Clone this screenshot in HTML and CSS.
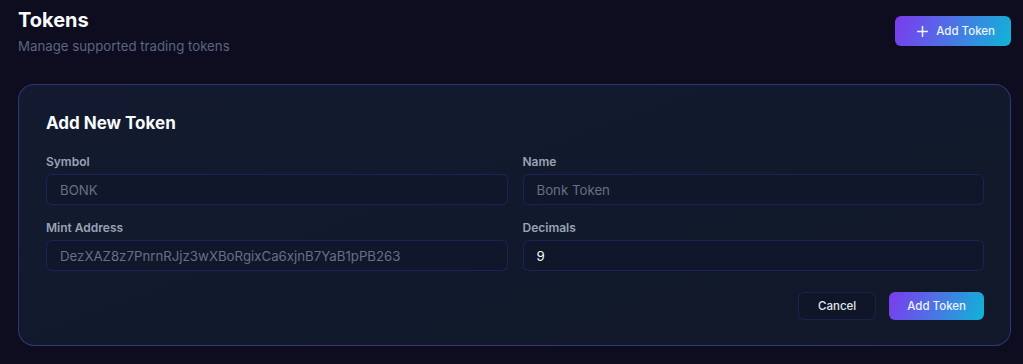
FILE: index.html
```html
<!DOCTYPE html>
<html lang="en">
<head>
<meta charset="utf-8">
<title>Tokens</title>
<link rel="stylesheet" href="styles.css">
</head>
<body>
<div class="page">
  <header class="page-header">
    <div class="titles">
      <h1 class="page-title">Tokens</h1>
      <p class="page-subtitle">Manage supported trading tokens</p>
    </div>
    <button class="btn btn-primary btn-header" type="button">
      <svg class="plus" width="11" height="11" viewBox="0 0 11 11" aria-hidden="true">
        <path d="M5.5 0.5v10M0.5 5.5h10" stroke="currentColor" stroke-width="1.5" stroke-linecap="round" fill="none"/>
      </svg>
      <span>Add Token</span>
    </button>
  </header>

  <section class="card">
    <h2 class="card-title">Add New Token</h2>
    <div class="form-grid">
      <label class="field">
        <span class="field-label">Symbol</span>
        <input class="input" type="text" placeholder="BONK">
      </label>
      <label class="field">
        <span class="field-label">Name</span>
        <input class="input" type="text" placeholder="Bonk Token">
      </label>
      <label class="field">
        <span class="field-label">Mint Address</span>
        <input class="input" type="text" placeholder="DezXAZ8z7PnrnRJjz3wXBoRgixCa6xjnB7YaB1pPB263">
      </label>
      <label class="field">
        <span class="field-label">Decimals</span>
        <input class="input" type="text" value="9">
      </label>
    </div>
    <div class="form-actions">
      <button class="btn btn-secondary" type="button">Cancel</button>
      <button class="btn btn-primary btn-submit" type="button">Add Token</button>
    </div>
  </section>
</div>
</body>
</html>
```
FILE: styles.css
```css
* { box-sizing: border-box; }
html, body { margin: 0; padding: 0; }
body {
  background: #0e0c1f;
  font-family: Inter, "Noto Sans", sans-serif;
  color: #f1f5f9;
  height: 364px;
  overflow: hidden;
}
.page {
  padding: 6px 12px 18px 18px;
}
.page-header {
  display: flex;
  justify-content: space-between;
  align-items: flex-start;
}
.page-title {
  margin: 0;
  font-size: 20px;
  line-height: 28px;
  font-weight: 700;
  color: #f8fafc;
}
.page-subtitle {
  margin: 2px 0 0;
  font-size: 13.25px;
  line-height: 20px;
  color: #5a6683;
}
.btn {
  font-family: inherit;
  border: 0;
  border-radius: 6px;
  font-size: 11.5px;
  font-weight: 500;
  height: 28px;
  padding: 0 19px;
  cursor: pointer;
  display: inline-flex;
  align-items: center;
  justify-content: center;
}
.btn-primary {
  color: #eef2ff;
  background: linear-gradient(110deg, #7c3aed 0%, #4f6fe6 45%, #0fb5d6 100%);
}
.btn-submit {
  padding: 0 18px;
}
.btn-header {
  margin-top: 10px;
  height: 30px;
  padding: 0 16px 0 22px;
  gap: 8px;
}
.plus { display: block; }
.btn-secondary {
  color: #e2e8f0;
  background: #0f1628;
  border: 1px solid rgba(79, 70, 229, 0.22);
}
.card {
  margin-top: 28px;
  height: 262px;
  border-radius: 16px;
  border: 1px solid rgba(99, 102, 241, 0.38);
  background: linear-gradient(160deg, #131a2f 0%, #111a2c 50%, #101829 100%);
  padding: 24px 26px 25px 27px;
}
.card-title {
  margin: 0 0 17px;
  font-size: 17px;
  line-height: 28px;
  font-weight: 700;
  color: #f8fafc;
}
.form-grid {
  display: grid;
  grid-template-columns: 1fr 1fr;
  column-gap: 15px;
  row-gap: 15px;
}
.field {
  display: flex;
  flex-direction: column;
  gap: 4px;
}
.field-label {
  font-size: 12px;
  line-height: 16px;
  font-weight: 600;
  color: #9aa3b5;
}
.input {
  height: 31px;
  border-radius: 6px;
  border: 1px solid rgba(67, 56, 202, 0.28);
  background: #10172a;
  color: #f8fafc;
  font-family: inherit;
  font-size: 13.25px;
  padding: 0 13px;
  outline: none;
}
.input::placeholder { color: #667085; }
.form-actions {
  display: flex;
  justify-content: flex-end;
  gap: 13px;
  margin-top: 21px;
}
```
